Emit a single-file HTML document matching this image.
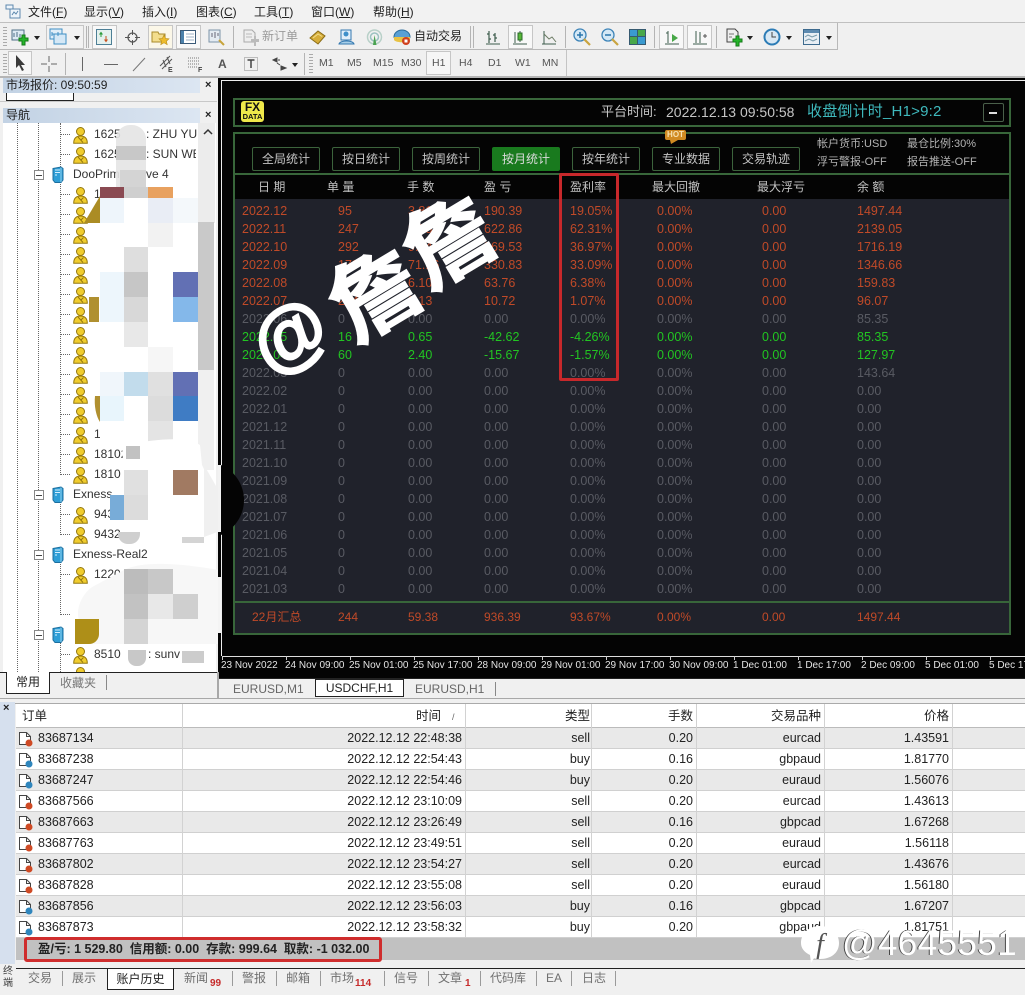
<!DOCTYPE html>
<html><head><meta charset="utf-8"><style>
*{box-sizing:border-box;margin:0;padding:0}
html,body{width:1025px;height:995px;overflow:hidden;background:#f0f0f0}
body{position:relative;font:12px "Liberation Sans","Noto Sans CJK SC",sans-serif;color:#222}
.a{position:absolute;white-space:nowrap}
.t{position:absolute;white-space:nowrap;line-height:16px}
.m{font-size:12px;top:4px;color:#222}
.sep{position:absolute;width:1px;background:#b4b4b4;height:22px}
.prs{position:absolute;border:1px solid #c6c6c6;background:#f8f8f8;height:24px}
.arr{position:absolute;width:0;height:0;border:3px solid transparent;border-top:4px solid #222;border-bottom:0}
.tf{position:absolute;top:56px;font-size:10.5px;color:#555;line-height:14px}
svg.i{position:absolute;overflow:visible}
.hd{position:absolute;left:3px;width:197px;height:15px;background:linear-gradient(90deg,#c2d2e4,#dce6f2);font-size:12px;line-height:15px;padding-left:3px;color:#222}
.x{position:absolute;font:bold 11px "Liberation Sans",sans-serif;color:#222;line-height:12px}
.n{position:absolute;left:94px;font-size:12px;line-height:16px;color:#333;white-space:nowrap}
.bk{position:absolute}
.dl{position:absolute;border-left:1px dotted #666}
.dh{position:absolute;border-top:1px dotted #666;height:0;width:9px}
.btn{position:absolute;top:147px;width:68px;height:24px;border:1px solid #3c643c;border-radius:2px;color:#c4c4c4;font-size:12px;line-height:23px;text-align:center;background:#060606}
.r{position:absolute;left:234px;width:776px;height:18px;line-height:18px;font-size:12.5px}
.r span{position:absolute;white-space:nowrap}
.r .c1{left:8px}.r .c2{left:104px}.r .c3{left:174px}.r .c4{left:250px}.r .c5{left:336px}.r .c6{left:423px}.r .c7{left:528px}.r .c8{left:623px}
.o{color:#c04a28}.g{color:#22c522}.z{color:#595b63}
.th{position:absolute;top:179px;color:#c2c2c2;font-size:12px;line-height:16px;white-space:nowrap}
.tl{position:absolute;top:660px;font-size:10px;color:#e4e4e4;line-height:12px;white-space:nowrap}
.tk{position:absolute;top:656px;width:1px;height:4px;background:#ccc}
.tr{position:absolute;left:16px;width:1009px;height:21px;font-size:12.5px;line-height:21px;border-bottom:1px solid #d0d0d0}
.tr span{position:absolute;white-space:nowrap}
.tr .s1{left:22px}.tr .s2{right:563px}.tr .s3{right:435px}.tr .s4{right:332px}.tr .s5{right:204px}.tr .s6{right:76px}
.gr{background:#e9e9e9}.wh{background:#fff}
.cl{position:absolute;top:704px;width:1px;height:233px;background:#d2d2d2}
.bt{position:absolute;top:970px;font-size:12px;line-height:16px;color:#707070}
.bs{position:absolute;top:971px;width:1px;height:15px;background:#9a9a9a}
.sb{position:absolute;color:#c62a2a;font-size:10px;font-weight:bold;line-height:10px;top:979px}
</style></head><body>
<svg width="0" height="0" style="position:absolute"><defs>
<symbol id="u" viewBox="0 0 15 17"><circle cx="7.500" cy="4.500" r="4" fill="#f0cc2e" stroke="#94780e"/><path d="M.7 16.300c0-5.300 2.600-7.300 6.800-7.300s6.800 2 6.800 7.300z" fill="#f0cc2e" stroke="#94780e"/><path d="M5 10l5 5.500M10.500 10.500l-3 3" stroke="#94780e"/></symbol>
<symbol id="s" viewBox="0 0 12 17"><path d="M1 2.500L9 1l2 1.500V14l-2 2.500H3L1 14z" fill="#2f9ed6" stroke="#1c6f9f"/><path d="M3 4h5M3 6.500h5M3 9h2" stroke="#d6f0ff"/><path d="M9 1.500V16" stroke="#8fd0ef"/></symbol>
<symbol id="dr" viewBox="0 0 15 17"><path d="M1.500 2.500h7l4 4v8h-11z" fill="#fff" stroke="#444"/><path d="M8.500 2.500v4h4" fill="none" stroke="#444"/><circle cx="11" cy="13" r="3.500" fill="#cf4a24"/></symbol>
<symbol id="db" viewBox="0 0 15 17"><path d="M1.500 2.500h7l4 4v8h-11z" fill="#fff" stroke="#444"/><path d="M8.500 2.500v4h4" fill="none" stroke="#444"/><circle cx="11" cy="13" r="3.500" fill="#2f86bd"/></symbol>
</defs></svg>

<!-- menu -->
<div class="a" style="left:0;top:0;width:1025px;height:22px;background:#f2f2f2"></div>
<svg class="i" style="left:5px;top:4px" width="16" height="15" viewBox="0 0 16 15"><path d="M1 1h7v4H1zM5 5h10v9H5z" fill="#eef4fa" stroke="#5d88ad"/><path d="M7 11l2-3 2 2 2-3" fill="none" stroke="#5d88ad"/></svg>
<span class="t m" style="left:28px">文件(<u>F</u>)</span><span class="t m" style="left:84px">显示(<u>V</u>)</span><span class="t m" style="left:142px">插入(<u>I</u>)</span><span class="t m" style="left:196px">图表(<u>C</u>)</span><span class="t m" style="left:254px">工具(<u>T</u>)</span><span class="t m" style="left:311px">窗口(<u>W</u>)</span><span class="t m" style="left:373px">帮助(<u>H</u>)</span>

<!-- toolbars -->
<div class="a" style="left:0;top:22px;width:1025px;height:1px;background:#c0c0c0"></div>
<div class="a" style="left:837px;top:23px;width:1px;height:27px;background:#b8b8b8"></div>
<div class="a" style="left:0;top:49px;width:837px;height:1px;background:#b8b8b8"></div>
<div class="a" style="left:566px;top:50px;width:1px;height:27px;background:#c4c4c4"></div>
<div class="a" style="left:0;top:76px;width:1025px;height:2px;background:#b5b5b5"></div>
<div class="a" style="left:3px;top:27px;width:4px;height:19px;background:repeating-linear-gradient(#aaa 0 1px,transparent 1px 3px)"></div>
<div class="a" style="left:3px;top:54px;width:4px;height:19px;background:repeating-linear-gradient(#aaa 0 1px,transparent 1px 3px)"></div>

<svg class="i" style="left:11px;top:29px" width="18" height="18" viewBox="0 0 18 18"><path d="M1 1h12v10H1z" fill="#dde9f2" stroke="#4f6f86"/><path d="M3 8V4M6 8V3M9 8V5" stroke="#4f6f86"/><path d="M8 9h3V6h3v3h3v3h-3v4h-3v-4H8z" fill="#25b52a" stroke="#157a19"/></svg>
<div class="arr" style="left:34px;top:36px"></div>
<div class="prs" style="left:46px;top:25px;width:38px;background:#f2f2f2"></div>
<svg class="i" style="left:49px;top:28px" width="18" height="18" viewBox="0 0 18 18"><path d="M1 1h12v10H1z" fill="#e0eef8" stroke="#3f8fc4"/><path d="M5 6h12v10H5z" fill="#d5e8f6" stroke="#3f8fc4"/><path d="M3 4v4M3 6h6M9 4v4" stroke="#3f8fc4"/></svg>
<div class="arr" style="left:74px;top:36px"></div>
<div class="sep" style="left:86px;top:26px"></div><div class="sep" style="left:88px;top:26px"></div>
<div class="prs" style="left:92px;top:25px;width:25px"></div>
<svg class="i" style="left:96px;top:29px" width="16" height="16" viewBox="0 0 16 16"><rect x=".5" y=".5" width="15" height="15" fill="#e4f1ee" stroke="#4d7f96"/><path d="M5 8V4M3.500 5.500L5 3.500l1.500 2" fill="#2b9a3a" stroke="#2b9a3a"/><path d="M10 7v5M8.500 10.500l1.500 2 1.500-2" fill="#c8501f" stroke="#c8501f"/></svg>
<svg class="i" style="left:125px;top:30px" width="15" height="15" viewBox="0 0 15 15"><circle cx="7.500" cy="7.500" r="4.500" fill="none" stroke="#555" stroke-width="1.300"/><path d="M7.500 0v5M7.500 10v5M0 7.500h5M10 7.500h5" stroke="#555"/></svg>
<div class="prs" style="left:148px;top:25px;width:25px;background:#fbf7e8"></div>
<svg class="i" style="left:151px;top:29px" width="19" height="17" viewBox="0 0 19 17"><path d="M1 3h6l1 2h6v8H1z" fill="#f3dd8d" stroke="#a88a2c"/><path d="M13 6l1.600 3.400 3.400.4-2.600 2.300.8 3.600-3.200-1.900-3.200 1.900.8-3.600L8 9.800l3.400-.4z" fill="#eebc2c" stroke="#b58a18" stroke-width=".6"/></svg>
<div class="prs" style="left:176px;top:25px;width:25px"></div>
<svg class="i" style="left:180px;top:29px" width="16" height="16" viewBox="0 0 16 16"><rect x=".5" y="1.500" width="15" height="13" fill="#fff" stroke="#3a5a78"/><rect x="1" y="2" width="3" height="12" fill="#4b81ab"/><path d="M6 5h8M6 8h8M6 11h8" stroke="#9cb2c4"/></svg>
<svg class="i" style="left:208px;top:29px" width="18" height="18" viewBox="0 0 18 18"><path d="M1 1h11v12H1z" fill="#e4ebf2" stroke="#7d93a8"/><path d="M4 8V4M7 9V3M10 7V4" stroke="#667"/><path d="M11 11l5 5" stroke="#c7a43c" stroke-width="2"/></svg>
<div class="sep" style="left:233px;top:26px"></div>
<svg class="i" style="left:243px;top:29px" width="17" height="18" viewBox="0 0 17 18"><path d="M1 1h8l3 3v9H1z" fill="#eee" stroke="#aaa"/><path d="M3 5h6M3 8h6" stroke="#bbb"/><path d="M8 10h3V7h2v3h3v3h-3v4h-2v-4H8z" fill="#bbb"/></svg>
<span class="t" style="left:262px;top:28px;color:#9a9a9a">新订单</span>
<svg class="i" style="left:309px;top:29px" width="18" height="17" viewBox="0 0 18 17"><path d="M1 9l8-7 7 5-7 8z" fill="#d6ad3a" stroke="#8a6c16"/><path d="M4 9l5-4 4 2.500" fill="none" stroke="#f0dc8c"/></svg>
<svg class="i" style="left:338px;top:29px" width="17" height="17" viewBox="0 0 17 17"><path d="M3 1h10v10H3z" fill="#e2eefa" stroke="#3478b0"/><circle cx="8" cy="5" r="2.500" fill="#3f8fca"/><path d="M1 15c1-4 14-4 15 0z" fill="#a9cfe8" stroke="#3478b0"/></svg>
<svg class="i" style="left:366px;top:29px" width="17" height="17" viewBox="0 0 17 17"><circle cx="8.500" cy="8" r="7" fill="none" stroke="#b8d0c8" stroke-width="1.500"/><circle cx="8.500" cy="8" r="4" fill="none" stroke="#9cc2c0" stroke-width="1.500"/><path d="M8.500 6l2 10H7z" fill="#49a24f"/></svg>
<svg class="i" style="left:393px;top:28px" width="18" height="18" viewBox="0 0 18 18"><path d="M1 9a8 7 0 0 1 16 0c0 4-16 4-16 0z" fill="#5aa0d4" stroke="#2a6c9c"/><path d="M1 9h16v3c-2 3-14 3-16 0z" fill="#e8c244"/><circle cx="13" cy="13" r="4" fill="#d0401e"/><rect x="11.500" y="11.500" width="3" height="3" fill="#fff"/></svg>
<span class="t" style="left:414px;top:28px">自动交易</span>
<div class="sep" style="left:470px;top:26px"></div><div class="sep" style="left:473px;top:26px"></div>
<svg class="i" style="left:485px;top:30px" width="16" height="15" viewBox="0 0 16 15"><path d="M1 14h14" stroke="#3d5c4c"/><path d="M4 1v12M2 4h2M4 9h2M10 3v9M8 5h2M10 8h2" stroke="#3d5c4c" stroke-width="1.200"/></svg>
<div class="prs" style="left:508px;top:25px;width:25px"></div>
<svg class="i" style="left:512px;top:30px" width="16" height="15" viewBox="0 0 16 15"><path d="M1 14h14M3 2v11" stroke="#3d5c4c"/><path d="M8 1v11" stroke="#3d5c4c"/><rect x="6" y="3" width="4" height="7" fill="#58b838" stroke="#2a6a2a"/></svg>
<svg class="i" style="left:541px;top:30px" width="16" height="15" viewBox="0 0 16 15"><path d="M1 14h14M3 1v13" stroke="#3d5c4c"/><path d="M3 4l5 5 3-2 4 5" fill="none" stroke="#6a7a62"/></svg>
<div class="sep" style="left:565px;top:26px"></div>
<svg class="i" style="left:573px;top:28px" width="18" height="18" viewBox="0 0 18 18"><circle cx="7" cy="7" r="6" fill="#d4e8f6" stroke="#3d84b8" stroke-width="1.300"/><path d="M4 7h6M7 4v6" stroke="#2a76ac" stroke-width="1.500"/><path d="M11 11l6 6" stroke="#c9a440" stroke-width="2.200"/></svg>
<svg class="i" style="left:601px;top:28px" width="18" height="18" viewBox="0 0 18 18"><circle cx="7" cy="7" r="6" fill="#d4e8f6" stroke="#3d84b8" stroke-width="1.300"/><path d="M4 7h6" stroke="#2a76ac" stroke-width="1.500"/><path d="M11 11l6 6" stroke="#c9a440" stroke-width="2.200"/></svg>
<svg class="i" style="left:629px;top:29px" width="17" height="16" viewBox="0 0 17 16"><rect width="17" height="16" fill="#365a70"/><rect x="1" y="1" width="7" height="6" fill="#3a9ad0"/><rect x="9" y="1" width="7" height="6" fill="#49a84a"/><rect x="1" y="8" width="7" height="7" fill="#49a84a"/><rect x="9" y="8" width="7" height="7" fill="#3a9ad0"/></svg>
<div class="sep" style="left:654px;top:26px"></div>
<div class="prs" style="left:659px;top:25px;width:25px"></div>
<svg class="i" style="left:664px;top:30px" width="16" height="15" viewBox="0 0 16 15"><path d="M1 14h14M4 1v12M2 3h2" stroke="#3d5c4c"/><path d="M8 4l6 4-6 4z" fill="#48a848"/></svg>
<div class="prs" style="left:687px;top:25px;width:25px"></div>
<svg class="i" style="left:692px;top:30px" width="16" height="15" viewBox="0 0 16 15"><path d="M1 14h14M4 1v12M8 2v11" stroke="#3d5c4c"/><path d="M11 6h4M13 4v4" stroke="#555"/></svg>
<div class="sep" style="left:716px;top:26px"></div>
<svg class="i" style="left:726px;top:28px" width="18" height="19" viewBox="0 0 18 19"><path d="M1 1h8l3 3v10H1z" fill="#eee" stroke="#444"/><path d="M3 6h5M3 9h3" stroke="#777"/><path d="M7 11h3V8h3v3h3v3h-3v4h-3v-4H7z" fill="#25b52a" stroke="#157a19"/></svg>
<div class="arr" style="left:747px;top:36px"></div>
<svg class="i" style="left:763px;top:28px" width="18" height="18" viewBox="0 0 18 18"><circle cx="9" cy="9" r="7.500" fill="#d8e8f4" stroke="#2c7cb6" stroke-width="2"/><path d="M9 4v5h4" fill="none" stroke="#444"/></svg>
<div class="arr" style="left:786px;top:36px"></div>
<svg class="i" style="left:803px;top:29px" width="17" height="16" viewBox="0 0 17 16"><rect x=".5" y=".5" width="16" height="15" fill="#e8eef4" stroke="#3d6a8e"/><rect x="1" y="1" width="15" height="3" fill="#5d8ab0"/><path d="M2 8l3-2 4 2 5-2M2 12l4-2 4 2 4-2" fill="none" stroke="#79a"/></svg>
<div class="arr" style="left:826px;top:36px"></div>

<div class="prs" style="left:8px;top:51px;width:24px;background:#f6f6f6"></div>
<svg class="i" style="left:15px;top:55px" width="11" height="16" viewBox="0 0 11 16"><path d="M1 0v13l3-3 3 6 2-1-3-5h4z" fill="#3a3a3a"/></svg>
<svg class="i" style="left:41px;top:56px" width="16" height="16" viewBox="0 0 16 16"><path d="M8 0v6M8 10v6M0 8h6M10 8h6" stroke="#666"/></svg>
<div class="sep" style="left:65px;top:53px"></div>
<div class="a" style="left:82px;top:57px;width:1px;height:14px;background:#666"></div>
<div class="a" style="left:104px;top:64px;width:14px;height:1px;background:#666"></div>
<svg class="i" style="left:132px;top:57px" width="14" height="15" viewBox="0 0 14 15"><path d="M1 14L13 1" stroke="#777"/></svg>
<svg class="i" style="left:159px;top:55px" width="16" height="18" viewBox="0 0 16 18"><path d="M1 11L11 1M3 14L13 4M4 5l3 7M8 2l3 7" stroke="#555" fill="none"/><text x="9" y="17" font-size="7" font-weight="bold" fill="#444" font-family="Liberation Sans">E</text></svg>
<svg class="i" style="left:187px;top:56px" width="17" height="17" viewBox="0 0 17 17"><path d="M1 2h12M1 5h12M1 8h12M1 11h9" stroke="#777" stroke-dasharray="1 1"/><text x="11" y="16" font-size="7" font-weight="bold" fill="#444" font-family="Liberation Sans">F</text></svg>
<span class="t" style="left:218px;top:56px;font-weight:bold;font-size:12px;color:#555">A</span>
<svg class="i" style="left:244px;top:57px" width="14" height="14" viewBox="0 0 14 14"><rect x=".5" y=".5" width="13" height="13" fill="none" stroke="#888" stroke-dasharray="1 1"/><path d="M3.500 3h7M7 3v8" stroke="#444" stroke-width="1.500"/></svg>
<svg class="i" style="left:272px;top:57px" width="16" height="13" viewBox="0 0 16 13"><path d="M1 3l4-2v4zM6 3h2M9 9l5 2-5 2zM5 6l3 2" fill="#444" stroke="#444"/></svg>
<div class="arr" style="left:292px;top:63px"></div>
<div class="sep" style="left:304px;top:53px"></div>
<div class="a" style="left:309px;top:54px;width:4px;height:19px;background:repeating-linear-gradient(#aaa 0 1px,transparent 1px 3px)"></div>
<span class="tf" style="left:319px">M1</span><span class="tf" style="left:347px">M5</span><span class="tf" style="left:373px">M15</span><span class="tf" style="left:401px">M30</span>
<div class="prs" style="left:426px;top:51px;width:25px;background:#f6f6f6"></div>
<span class="tf" style="left:432px">H1</span><span class="tf" style="left:459px">H4</span><span class="tf" style="left:488px">D1</span><span class="tf" style="left:515px">W1</span><span class="tf" style="left:542px">MN</span>

<!-- left panels -->
<div class="hd" style="top:78px">市场报价: 09:50:59</div><span class="x" style="left:205px;top:79px">×</span>
<div class="a" style="left:6px;top:93px;width:68px;height:8px;background:#fff;border:1px solid #222;border-top:0"></div>
<div class="a" style="left:0;top:101px;width:217px;height:6px;background:#f0f0f0;border-top:1px solid #c8c8c8"></div>
<div class="hd" style="top:108px">导航</div><span class="x" style="left:205px;top:109px">×</span>
<div class="a" style="left:3px;top:123px;width:213px;height:549px;background:#fff"></div>
<div class="dl" style="left:17px;top:123px;height:549px"></div>
<div class="dl" style="left:38px;top:123px;height:549px"></div>
<div class="dl" style="left:60px;top:123px;height:52px"></div><div class="dl" style="left:60px;top:180px;height:295px"></div><div class="dl" style="left:60px;top:500px;height:35px"></div><div class="dl" style="left:60px;top:560px;height:55px"></div><div class="dl" style="left:60px;top:640px;height:32px"></div>

<div class="dh" style="left:61px;top:134px"></div><svg class="i" style="left:73px;top:127px" width="15" height="17"><use href="#u"/></svg>
<div class="dh" style="left:61px;top:154px"></div><svg class="i" style="left:73px;top:147px" width="15" height="17"><use href="#u"/></svg>
<div class="dh" style="left:61px;top:194px"></div><svg class="i" style="left:73px;top:187px" width="15" height="17"><use href="#u"/></svg>
<div class="dh" style="left:61px;top:214px"></div><svg class="i" style="left:73px;top:207px" width="15" height="17"><use href="#u"/></svg>
<div class="dh" style="left:61px;top:234px"></div><svg class="i" style="left:73px;top:227px" width="15" height="17"><use href="#u"/></svg>
<div class="dh" style="left:61px;top:254px"></div><svg class="i" style="left:73px;top:247px" width="15" height="17"><use href="#u"/></svg>
<div class="dh" style="left:61px;top:274px"></div><svg class="i" style="left:73px;top:267px" width="15" height="17"><use href="#u"/></svg>
<div class="dh" style="left:61px;top:294px"></div><svg class="i" style="left:73px;top:287px" width="15" height="17"><use href="#u"/></svg>
<div class="dh" style="left:61px;top:314px"></div><svg class="i" style="left:73px;top:307px" width="15" height="17"><use href="#u"/></svg>
<div class="dh" style="left:61px;top:334px"></div><svg class="i" style="left:73px;top:327px" width="15" height="17"><use href="#u"/></svg>
<div class="dh" style="left:61px;top:354px"></div><svg class="i" style="left:73px;top:347px" width="15" height="17"><use href="#u"/></svg>
<div class="dh" style="left:61px;top:374px"></div><svg class="i" style="left:73px;top:367px" width="15" height="17"><use href="#u"/></svg>
<div class="dh" style="left:61px;top:394px"></div><svg class="i" style="left:73px;top:387px" width="15" height="17"><use href="#u"/></svg>
<div class="dh" style="left:61px;top:414px"></div><svg class="i" style="left:73px;top:407px" width="15" height="17"><use href="#u"/></svg>
<div class="dh" style="left:61px;top:434px"></div><svg class="i" style="left:73px;top:427px" width="15" height="17"><use href="#u"/></svg>
<div class="dh" style="left:61px;top:454px"></div><svg class="i" style="left:73px;top:447px" width="15" height="17"><use href="#u"/></svg>
<div class="dh" style="left:61px;top:474px"></div><svg class="i" style="left:73px;top:467px" width="15" height="17"><use href="#u"/></svg>
<div class="dh" style="left:61px;top:514px"></div><svg class="i" style="left:73px;top:507px" width="15" height="17"><use href="#u"/></svg>
<div class="dh" style="left:61px;top:534px"></div><svg class="i" style="left:73px;top:527px" width="15" height="17"><use href="#u"/></svg>
<div class="dh" style="left:61px;top:574px"></div><svg class="i" style="left:73px;top:567px" width="15" height="17"><use href="#u"/></svg>
<div class="dh" style="left:61px;top:614px"></div>
<div class="dh" style="left:61px;top:654px"></div><svg class="i" style="left:73px;top:647px" width="15" height="17"><use href="#u"/></svg>
<svg class="i" style="left:73px;top:667px;clip-path:inset(0 0 12px 0)" width="15" height="17"><use href="#u"/></svg>

<div class="a" style="left:34px;top:170px;width:10px;height:10px;border:1px solid #888;background:#fff"></div><div class="a" style="left:36px;top:175px;width:6px;height:1px;background:#444"></div><svg class="i" style="left:52px;top:166px" width="12" height="17"><use href="#s"/></svg>
<div class="a" style="left:34px;top:490px;width:10px;height:10px;border:1px solid #888;background:#fff"></div><div class="a" style="left:36px;top:495px;width:6px;height:1px;background:#444"></div><svg class="i" style="left:52px;top:486px" width="12" height="17"><use href="#s"/></svg>
<div class="a" style="left:34px;top:550px;width:10px;height:10px;border:1px solid #888;background:#fff"></div><div class="a" style="left:36px;top:555px;width:6px;height:1px;background:#444"></div><svg class="i" style="left:52px;top:546px" width="12" height="17"><use href="#s"/></svg>
<div class="a" style="left:34px;top:630px;width:10px;height:10px;border:1px solid #888;background:#fff"></div><div class="a" style="left:36px;top:635px;width:6px;height:1px;background:#444"></div><svg class="i" style="left:52px;top:626px" width="12" height="17"><use href="#s"/></svg>

<span class="n" style="top:126px">1625</span><span class="n" style="top:126px;left:146px">: ZHU YU</span>
<span class="n" style="top:146px">1625</span><span class="n" style="top:146px;left:146px;width:50px;overflow:hidden">: SUN WEI</span>
<span class="n" style="top:166px;left:73px">DooPrim</span><span class="n" style="top:166px;left:146px">ve 4</span>
<span class="n" style="top:186px">1810</span>
<span class="n" style="top:426px">181</span>
<span class="n" style="top:446px">18102</span>
<span class="n" style="top:466px">1810</span>
<span class="n" style="top:486px;left:73px">Exness</span>
<span class="n" style="top:506px">943</span>
<span class="n" style="top:526px">9432</span>
<span class="n" style="top:546px;left:73px">Exness-Real2</span>
<span class="n" style="top:566px">1220</span>
<span class="n" style="top:646px">8510</span><span class="n" style="top:646px;left:148px">: sunv</span>

<!-- mosaic -->
<div class="bk" style="left:198px;top:123px;width:17px;height:100px;background:#ececec"></div>
<div class="bk" style="left:198px;top:222px;width:16px;height:148px;background:#c9c9c9"></div>
<div class="bk" style="left:198px;top:370px;width:16px;height:100px;background:#f0f0f0"></div>
<svg class="i" style="left:203px;top:128px" width="10" height="7" viewBox="0 0 10 7"><path d="M1 6l4-4 4 4" fill="none" stroke="#333" stroke-width="1.500"/></svg>
<div class="bk" style="left:116px;top:125px;width:30px;height:62px;background:#e4e4e4;border-radius:14px 14px 0 0;opacity:.9"></div>
<div class="bk" style="left:116px;top:146px;width:30px;height:14px;background:#c8c8c8"></div>
<div class="bk" style="left:120px;top:170px;width:26px;height:17px;background:#d4d4d4"></div>
<div class="bk" style="left:100px;top:187px;width:98px;height:258px;background:#fff"></div>
<div class="bk" style="left:100px;top:187px;width:24px;height:11px;background:#8a4a52"></div>
<div class="bk" style="left:124px;top:187px;width:24px;height:11px;background:#cfcfcf"></div>
<div class="bk" style="left:148px;top:187px;width:25px;height:11px;background:#e8a15f"></div>
<svg class="i" style="left:84px;top:196px" width="16" height="27"><path d="M16 0v27H0z" fill="#ab8c24"/></svg>
<div class="bk" style="left:100px;top:198px;width:24px;height:25px;background:#eef5fb"></div>
<div class="bk" style="left:148px;top:198px;width:25px;height:25px;background:#e9edf5"></div>
<div class="bk" style="left:173px;top:198px;width:25px;height:25px;background:#f4f8fb"></div>
<div class="bk" style="left:148px;top:223px;width:25px;height:24px;background:#f2f2f2"></div>
<div class="bk" style="left:124px;top:247px;width:24px;height:25px;background:#dedede"></div>
<div class="bk" style="left:100px;top:272px;width:24px;height:25px;background:#edf6fc"></div>
<div class="bk" style="left:124px;top:272px;width:24px;height:25px;background:#c6c6c6"></div>
<div class="bk" style="left:173px;top:272px;width:25px;height:25px;background:#6270b4"></div>
<div class="bk" style="left:89px;top:297px;width:10px;height:25px;background:#b09030"></div>
<div class="bk" style="left:100px;top:297px;width:24px;height:25px;background:#edf6fc"></div>
<div class="bk" style="left:124px;top:297px;width:24px;height:25px;background:#d8d8d8"></div>
<div class="bk" style="left:173px;top:297px;width:25px;height:25px;background:#84b8ea"></div>
<div class="bk" style="left:124px;top:322px;width:24px;height:25px;background:#e8e8e8"></div>
<div class="bk" style="left:148px;top:347px;width:25px;height:25px;background:#f6f6f6"></div>
<div class="bk" style="left:100px;top:372px;width:24px;height:24px;background:#f0f6fb"></div>
<div class="bk" style="left:124px;top:372px;width:24px;height:24px;background:#c2dcec"></div>
<div class="bk" style="left:148px;top:372px;width:25px;height:24px;background:#e0e0e0"></div>
<div class="bk" style="left:173px;top:372px;width:25px;height:24px;background:#6270b4"></div>
<svg class="i" style="left:92px;top:396px" width="8" height="26"><path d="M3 0h5v26C4 20 2 10 3 0z" fill="#b09030"/></svg>
<div class="bk" style="left:100px;top:396px;width:24px;height:25px;background:#e8f5fc"></div>
<div class="bk" style="left:148px;top:396px;width:25px;height:25px;background:#dcdcdc"></div>
<div class="bk" style="left:173px;top:396px;width:25px;height:25px;background:#3f7cc4"></div>
<div class="bk" style="left:148px;top:421px;width:25px;height:24px;background:#e4e4e4"></div>

<svg class="i" style="left:112px;top:425px" width="112" height="115"><path d="M10 20C40 15 75 10 88 20L90 40 102 65 110 70 110 105C90 115 30 112 16 110L6 80 12 60z" fill="#fff"/><path d="M92 40l16 28v38l-16 6z" fill="#f0f0f0"/></svg>
<div class="bk" style="left:126px;top:446px;width:14px;height:13px;background:#c2c2c2"></div>
<div class="bk" style="left:124px;top:470px;width:24px;height:25px;background:#e0e0e0"></div>
<div class="bk" style="left:173px;top:470px;width:25px;height:25px;background:#a17a62"></div>
<div class="bk" style="left:110px;top:495px;width:14px;height:25px;background:#78acd8"></div>
<div class="bk" style="left:124px;top:495px;width:24px;height:25px;background:#dcdcdc"></div>
<div class="bk" style="left:118px;top:532px;width:22px;height:12px;background:#cfcfcf;border-radius:0 0 10px 10px"></div>
<div class="bk" style="left:182px;top:537px;width:22px;height:6px;background:#d4d4d4"></div>

<svg class="i" style="left:74px;top:562px" width="150" height="82"><path d="M50 8C70-2 110 2 145 8l3 50-3 24H14C8 76 4 70 6 60 0 50 8 30 20 24z" fill="#f7f7f7"/></svg>
<div class="bk" style="left:124px;top:569px;width:24px;height:25px;background:#bcbcbc"></div>
<div class="bk" style="left:148px;top:569px;width:25px;height:25px;background:#c8c8c8"></div>
<div class="bk" style="left:124px;top:594px;width:24px;height:25px;background:#c2c2c2"></div>
<div class="bk" style="left:148px;top:594px;width:25px;height:25px;background:#e8e8e8"></div>
<div class="bk" style="left:173px;top:594px;width:25px;height:25px;background:#cfcfcf"></div>
<div class="bk" style="left:124px;top:619px;width:24px;height:25px;background:#d4d4d4"></div>
<div class="bk" style="left:75px;top:619px;width:24px;height:25px;background:#ae8f18;border-radius:0 0 10px 0"></div>
<div class="bk" style="left:128px;top:650px;width:18px;height:16px;background:#c8c8c8;border-radius:0 0 8px 8px"></div>
<div class="bk" style="left:182px;top:651px;width:22px;height:12px;background:#cccccc"></div>

<!-- nav tabs -->
<div class="a" style="left:0;top:672px;width:217px;height:26px;background:#f0f0f0;border-top:1px solid #222"></div>
<div class="a" style="left:6px;top:672px;width:44px;height:22px;background:#fff;border:1px solid #222;border-top:0;text-align:center;line-height:20px;color:#222">常用</div>
<span class="t" style="left:60px;top:675px;color:#777">收藏夹</span>
<div class="a" style="left:106px;top:675px;width:1px;height:15px;background:#888"></div>

<!-- chart -->
<div class="a" style="left:218px;top:78px;width:807px;height:600px;background:#040404"></div>
<div class="a" style="left:221px;top:80px;width:804px;height:1px;background:#eee"></div>
<div class="a" style="left:221px;top:80px;width:1px;height:576px;background:#eee"></div>
<div class="a" style="left:218px;top:465px;width:3px;height:67px;background:#f2f2f2"></div>
<div class="a" style="left:218px;top:577px;width:3px;height:56px;background:#f4f4f4"></div>
<div class="a" style="left:233px;top:98px;width:778px;height:29px;border:2px solid #38663a;background:#040404"></div>
<div class="a" style="left:241px;top:101px;width:23px;height:21px;background:#efe84a;border-radius:3px;color:#111;text-align:center;font:bold 12px/11px 'Liberation Sans',sans-serif;padding-top:1px">FX<div style="font-size:7.500px;line-height:8px">DATA</div></div>
<span class="t" style="left:601px;top:104px;font-size:13px;color:#c6c6c6">平台时间:</span>
<span class="t" style="left:666px;top:104px;font-size:14px;color:#c6c6c6">2022.12.13 09:50:58</span>
<span class="t" style="left:807px;top:104px;font-size:15px;letter-spacing:.2px;color:#3fb9bd">收盘倒计时_H1&gt;9:2</span>
<div class="a" style="left:983px;top:103px;width:21px;height:19px;border:1px solid #4a5f4a;border-radius:2px"></div><div class="a" style="left:989px;top:112px;width:8px;height:2px;background:#ddd"></div>

<div class="a" style="left:233px;top:132px;width:778px;height:503px;border:2px solid #38663a;background:#20222b"></div>
<div class="a" style="left:235px;top:134px;width:774px;height:41px;background:#040404;border-bottom:2px solid #38663a"></div>
<div class="a" style="left:235px;top:175px;width:774px;height:24px;background:#040404"></div>
<div class="btn" style="left:252px">全局统计</div><div class="btn" style="left:332px">按日统计</div><div class="btn" style="left:412px">按周统计</div><div class="btn" style="left:492px;background:#197a1e;color:#dcdcdc;border-color:#197a1e">按月统计</div><div class="btn" style="left:572px">按年统计</div><div class="btn" style="left:652px">专业数据</div><div class="btn" style="left:732px">交易轨迹</div>
<div class="a" style="left:665px;top:130px;width:21px;height:10px;background:#d08a22;border-radius:2px;color:#f6e0b0;font:bold 8px/10px 'Liberation Sans',sans-serif;text-align:center">HOT</div>
<svg class="i" style="left:670px;top:140px" width="8" height="4"><path d="M0 0h8L1 4z" fill="#d08a22"/></svg>
<span class="t" style="left:817px;top:136px;font-size:11px;color:#b4b4b4">帐户货币:USD</span><span class="t" style="left:907px;top:136px;font-size:11px;color:#b4b4b4">最仓比例:30%</span>
<span class="t" style="left:817px;top:154px;font-size:11px;color:#b4b4b4">浮亏警报-OFF</span><span class="t" style="left:907px;top:154px;font-size:11px;color:#b4b4b4">报告推送-OFF</span>

<span class="th" style="left:258px">日 期</span><span class="th" style="left:327px">单 量</span><span class="th" style="left:407px">手 数</span><span class="th" style="left:484px">盈 亏</span><span class="th" style="left:570px">盈利率</span><span class="th" style="left:652px">最大回撤</span><span class="th" style="left:757px">最大浮亏</span><span class="th" style="left:857px">余 额</span>

<div class="r o" style="top:202px"><span class="c1">2022.12</span><span class="c2">95</span><span class="c3">3.81</span><span class="c4">190.39</span><span class="c5">19.05%</span><span class="c6">0.00%</span><span class="c7">0.00</span><span class="c8">1497.44</span></div>
<div class="r o" style="top:220px"><span class="c1">2022.11</span><span class="c2">247</span><span class="c3">9.88</span><span class="c4">622.86</span><span class="c5">62.31%</span><span class="c6">0.00%</span><span class="c7">0.00</span><span class="c8">2139.05</span></div>
<div class="r o" style="top:238px"><span class="c1">2022.10</span><span class="c2">292</span><span class="c3">9.64</span><span class="c4">369.53</span><span class="c5">36.97%</span><span class="c6">0.00%</span><span class="c7">0.00</span><span class="c8">1716.19</span></div>
<div class="r o" style="top:256px"><span class="c1">2022.09</span><span class="c2">179</span><span class="c3">71.16</span><span class="c4">330.83</span><span class="c5">33.09%</span><span class="c6">0.00%</span><span class="c7">0.00</span><span class="c8">1346.66</span></div>
<div class="r o" style="top:274px"><span class="c1">2022.08</span><span class="c2">53</span><span class="c3">6.10</span><span class="c4">63.76</span><span class="c5">6.38%</span><span class="c6">0.00%</span><span class="c7">0.00</span><span class="c8">159.83</span></div>
<div class="r o" style="top:292px"><span class="c1">2022.07</span><span class="c2">254</span><span class="c3">2.13</span><span class="c4">10.72</span><span class="c5">1.07%</span><span class="c6">0.00%</span><span class="c7">0.00</span><span class="c8">96.07</span></div>
<div class="r z" style="top:310px"><span class="c1">2022.06</span><span class="c2">0</span><span class="c3">0.00</span><span class="c4">0.00</span><span class="c5">0.00%</span><span class="c6">0.00%</span><span class="c7">0.00</span><span class="c8">85.35</span></div>
<div class="r g" style="top:328px"><span class="c1">2022.05</span><span class="c2">16</span><span class="c3">0.65</span><span class="c4">-42.62</span><span class="c5">-4.26%</span><span class="c6">0.00%</span><span class="c7">0.00</span><span class="c8">85.35</span></div>
<div class="r g" style="top:346px"><span class="c1">2022.04</span><span class="c2">60</span><span class="c3">2.40</span><span class="c4">-15.67</span><span class="c5">-1.57%</span><span class="c6">0.00%</span><span class="c7">0.00</span><span class="c8">127.97</span></div>
<div class="r z" style="top:364px"><span class="c1">2022.03</span><span class="c2">0</span><span class="c3">0.00</span><span class="c4">0.00</span><span class="c5">0.00%</span><span class="c6">0.00%</span><span class="c7">0.00</span><span class="c8">143.64</span></div>
<div class="r z" style="top:382px"><span class="c1">2022.02</span><span class="c2">0</span><span class="c3">0.00</span><span class="c4">0.00</span><span class="c5">0.00%</span><span class="c6">0.00%</span><span class="c7">0.00</span><span class="c8">0.00</span></div>
<div class="r z" style="top:400px"><span class="c1">2022.01</span><span class="c2">0</span><span class="c3">0.00</span><span class="c4">0.00</span><span class="c5">0.00%</span><span class="c6">0.00%</span><span class="c7">0.00</span><span class="c8">0.00</span></div>
<div class="r z" style="top:418px"><span class="c1">2021.12</span><span class="c2">0</span><span class="c3">0.00</span><span class="c4">0.00</span><span class="c5">0.00%</span><span class="c6">0.00%</span><span class="c7">0.00</span><span class="c8">0.00</span></div>
<div class="r z" style="top:436px"><span class="c1">2021.11</span><span class="c2">0</span><span class="c3">0.00</span><span class="c4">0.00</span><span class="c5">0.00%</span><span class="c6">0.00%</span><span class="c7">0.00</span><span class="c8">0.00</span></div>
<div class="r z" style="top:454px"><span class="c1">2021.10</span><span class="c2">0</span><span class="c3">0.00</span><span class="c4">0.00</span><span class="c5">0.00%</span><span class="c6">0.00%</span><span class="c7">0.00</span><span class="c8">0.00</span></div>
<div class="r z" style="top:472px"><span class="c1">2021.09</span><span class="c2">0</span><span class="c3">0.00</span><span class="c4">0.00</span><span class="c5">0.00%</span><span class="c6">0.00%</span><span class="c7">0.00</span><span class="c8">0.00</span></div>
<div class="r z" style="top:490px"><span class="c1">2021.08</span><span class="c2">0</span><span class="c3">0.00</span><span class="c4">0.00</span><span class="c5">0.00%</span><span class="c6">0.00%</span><span class="c7">0.00</span><span class="c8">0.00</span></div>
<div class="r z" style="top:508px"><span class="c1">2021.07</span><span class="c2">0</span><span class="c3">0.00</span><span class="c4">0.00</span><span class="c5">0.00%</span><span class="c6">0.00%</span><span class="c7">0.00</span><span class="c8">0.00</span></div>
<div class="r z" style="top:526px"><span class="c1">2021.06</span><span class="c2">0</span><span class="c3">0.00</span><span class="c4">0.00</span><span class="c5">0.00%</span><span class="c6">0.00%</span><span class="c7">0.00</span><span class="c8">0.00</span></div>
<div class="r z" style="top:544px"><span class="c1">2021.05</span><span class="c2">0</span><span class="c3">0.00</span><span class="c4">0.00</span><span class="c5">0.00%</span><span class="c6">0.00%</span><span class="c7">0.00</span><span class="c8">0.00</span></div>
<div class="r z" style="top:562px"><span class="c1">2021.04</span><span class="c2">0</span><span class="c3">0.00</span><span class="c4">0.00</span><span class="c5">0.00%</span><span class="c6">0.00%</span><span class="c7">0.00</span><span class="c8">0.00</span></div>
<div class="r z" style="top:580px"><span class="c1">2021.03</span><span class="c2">0</span><span class="c3">0.00</span><span class="c4">0.00</span><span class="c5">0.00%</span><span class="c6">0.00%</span><span class="c7">0.00</span><span class="c8">0.00</span></div>
<div class="a" style="left:235px;top:601px;width:774px;height:2px;background:#38663a"></div>
<div class="r o" style="top:608px;font-size:12px"><span style="left:18px">22月汇总</span><span class="c2">244</span><span class="c3">59.38</span><span class="c4">936.39</span><span class="c5">93.67%</span><span class="c6">0.00%</span><span class="c7">0.00</span><span class="c8">1497.44</span></div>

<!-- black blob and red box -->
<svg class="i" style="left:221px;top:465px" width="24" height="70"><path d="M0 0C14 6 23 20 23 35S14 64 0 70z" fill="#040404"/></svg>
<div class="a" style="left:559px;top:173px;width:60px;height:208px;border:3px solid #c7282b;border-radius:2px"></div>

<!-- watermark -->
<svg class="i" style="left:230px;top:170px" width="300" height="260" viewBox="0 0 300 260">
<text x="62" y="170" transform="rotate(-31 62 170)" font-family="Liberation Sans,sans-serif" font-size="76" font-weight="bold" fill="#fff" stroke="#fff" stroke-width="2" text-anchor="middle" dominant-baseline="middle">@</text>
<text x="142" y="119" transform="rotate(-31 142 119)" font-family="Noto Sans CJK SC,sans-serif" font-size="88" font-weight="bold" fill="#fff" stroke="#fff" stroke-width="1.500" text-anchor="middle" dominant-baseline="central">詹</text>
<text x="216" y="66" transform="rotate(-31 216 66)" font-family="Noto Sans CJK SC,sans-serif" font-size="88" font-weight="bold" fill="#fff" stroke="#fff" stroke-width="1.500" text-anchor="middle" dominant-baseline="central">詹</text>
</svg>

<!-- time axis -->
<div class="a" style="left:222px;top:656px;width:803px;height:1px;background:#ddd"></div>
<span class="tk" style="left:222px"></span><span class="tk" style="left:286px"></span><span class="tk" style="left:350px"></span><span class="tk" style="left:414px"></span><span class="tk" style="left:478px"></span><span class="tk" style="left:542px"></span><span class="tk" style="left:606px"></span><span class="tk" style="left:670px"></span><span class="tk" style="left:734px"></span><span class="tk" style="left:798px"></span><span class="tk" style="left:862px"></span><span class="tk" style="left:926px"></span><span class="tk" style="left:990px"></span>
<span class="tl" style="left:221px">23 Nov 2022</span><span class="tl" style="left:285px">24 Nov 09:00</span><span class="tl" style="left:349px">25 Nov 01:00</span><span class="tl" style="left:413px">25 Nov 17:00</span><span class="tl" style="left:477px">28 Nov 09:00</span><span class="tl" style="left:541px">29 Nov 01:00</span><span class="tl" style="left:605px">29 Nov 17:00</span><span class="tl" style="left:669px">30 Nov 09:00</span><span class="tl" style="left:733px">1 Dec 01:00</span><span class="tl" style="left:797px">1 Dec 17:00</span><span class="tl" style="left:861px">2 Dec 09:00</span><span class="tl" style="left:925px">5 Dec 01:00</span><span class="tl" style="left:989px">5 Dec 17:00</span>

<div class="a" style="left:219px;top:678px;width:806px;height:1px;background:#222"></div>
<div class="a" style="left:219px;top:679px;width:806px;height:19px;background:#f0f0f0"></div>
<div class="a" style="left:217px;top:672px;width:2px;height:26px;background:#a8a8a8"></div>
<span class="t" style="left:233px;top:681px;color:#666">EURUSD,M1</span>
<div class="a" style="left:315px;top:678px;width:89px;height:19px;background:#fff;border:1px solid #222;border-top:2px solid #222;text-align:center;line-height:17px;color:#222">USDCHF,H1</div>
<span class="t" style="left:415px;top:681px;color:#666">EURUSD,H1</span>
<div class="a" style="left:495px;top:682px;width:1px;height:14px;background:#888"></div>

<!-- terminal -->
<div class="a" style="left:0;top:698px;width:1025px;height:297px;background:#f0f0f0;border-top:1px solid #a8a8a8"></div>
<div class="a" style="left:0;top:702px;width:15px;height:262px;background:#d6e0ee"></div>
<span class="x" style="left:3px;top:702px">×</span>
<div class="a" style="left:15px;top:703px;width:1010px;height:1px;background:#aaa"></div>
<div class="a" style="left:16px;top:704px;width:1009px;height:24px;background:#fff;border-bottom:1px solid #bbb"></div>
<span class="t" style="left:22px;top:708px;font-size:12.5px">订单</span><span class="t" style="left:416px;top:708px;font-size:12.5px">时间</span><span class="t" style="left:452px;top:709px;font-size:9px;color:#666">/</span><span class="t" style="right:435px;top:708px;font-size:12.5px">类型</span><span class="t" style="right:332px;top:708px;font-size:12.5px">手数</span><span class="t" style="right:204px;top:708px;font-size:12.5px">交易品种</span><span class="t" style="right:76px;top:708px;font-size:12.5px">价格</span>

<div class="tr gr" style="top:728px"><span class="s1">83687134</span><span class="s2">2022.12.12 22:48:38</span><span class="s3">sell</span><span class="s4">0.20</span><span class="s5">eurcad</span><span class="s6">1.43591</span></div>
<div class="tr wh" style="top:749px"><span class="s1">83687238</span><span class="s2">2022.12.12 22:54:43</span><span class="s3">buy</span><span class="s4">0.16</span><span class="s5">gbpaud</span><span class="s6">1.81770</span></div>
<div class="tr gr" style="top:770px"><span class="s1">83687247</span><span class="s2">2022.12.12 22:54:46</span><span class="s3">buy</span><span class="s4">0.20</span><span class="s5">euraud</span><span class="s6">1.56076</span></div>
<div class="tr wh" style="top:791px"><span class="s1">83687566</span><span class="s2">2022.12.12 23:10:09</span><span class="s3">sell</span><span class="s4">0.20</span><span class="s5">eurcad</span><span class="s6">1.43613</span></div>
<div class="tr gr" style="top:812px"><span class="s1">83687663</span><span class="s2">2022.12.12 23:26:49</span><span class="s3">sell</span><span class="s4">0.16</span><span class="s5">gbpcad</span><span class="s6">1.67268</span></div>
<div class="tr wh" style="top:833px"><span class="s1">83687763</span><span class="s2">2022.12.12 23:49:51</span><span class="s3">sell</span><span class="s4">0.20</span><span class="s5">euraud</span><span class="s6">1.56118</span></div>
<div class="tr gr" style="top:854px"><span class="s1">83687802</span><span class="s2">2022.12.12 23:54:27</span><span class="s3">sell</span><span class="s4">0.20</span><span class="s5">eurcad</span><span class="s6">1.43676</span></div>
<div class="tr wh" style="top:875px"><span class="s1">83687828</span><span class="s2">2022.12.12 23:55:08</span><span class="s3">sell</span><span class="s4">0.20</span><span class="s5">euraud</span><span class="s6">1.56180</span></div>
<div class="tr gr" style="top:896px"><span class="s1">83687856</span><span class="s2">2022.12.12 23:56:03</span><span class="s3">buy</span><span class="s4">0.16</span><span class="s5">gbpcad</span><span class="s6">1.67207</span></div>
<div class="tr wh" style="top:917px"><span class="s1">83687873</span><span class="s2">2022.12.12 23:58:32</span><span class="s3">buy</span><span class="s4">0.20</span><span class="s5">gbpaud</span><span class="s6">1.81751</span></div>
<div class="cl" style="left:182px"></div><div class="cl" style="left:465px"></div><div class="cl" style="left:591px"></div><div class="cl" style="left:696px"></div><div class="cl" style="left:824px"></div><div class="cl" style="left:952px"></div>

<svg class="i" style="left:18px;top:730px" width="15" height="17"><use href="#dr"/></svg>
<svg class="i" style="left:18px;top:751px" width="15" height="17"><use href="#db"/></svg>
<svg class="i" style="left:18px;top:772px" width="15" height="17"><use href="#db"/></svg>
<svg class="i" style="left:18px;top:793px" width="15" height="17"><use href="#dr"/></svg>
<svg class="i" style="left:18px;top:814px" width="15" height="17"><use href="#dr"/></svg>
<svg class="i" style="left:18px;top:835px" width="15" height="17"><use href="#dr"/></svg>
<svg class="i" style="left:18px;top:856px" width="15" height="17"><use href="#dr"/></svg>
<svg class="i" style="left:18px;top:877px" width="15" height="17"><use href="#dr"/></svg>
<svg class="i" style="left:18px;top:898px" width="15" height="17"><use href="#db"/></svg>
<svg class="i" style="left:18px;top:919px" width="15" height="17"><use href="#db"/></svg>

<div class="a" style="left:16px;top:938px;width:1009px;height:22px;background:#c1c1c1"></div>
<span class="t" style="left:38px;top:941px;font-size:12.5px;font-weight:bold;color:#222">盈/亏: 1 529.80&nbsp; 信用额: 0.00&nbsp; 存款: 999.64&nbsp; 取款: -1 032.00</span>

<!-- bottom tabs -->
<div class="a" style="left:16px;top:960px;width:1009px;height:8px;background:#f0f0f0"></div>
<div class="a" style="left:16px;top:968px;width:1009px;height:1px;background:#222"></div>
<div class="a" style="left:107px;top:968px;width:67px;height:22px;background:#fff;border:1px solid #222;text-align:center;line-height:20px;color:#222">账户历史</div>
<div class="a" style="left:1px;top:966px;width:14px;height:25px;color:#444;font-size:10px;line-height:12px;text-align:center">终<br>端</div>
<span class="bt" style="left:28px">交易</span><span class="bs" style="left:62px"></span><span class="bt" style="left:72px">展示</span>
<span class="bt" style="left:184px">新闻</span><span class="sb" style="left:210px">99</span><span class="bs" style="left:232px"></span>
<span class="bt" style="left:242px">警报</span><span class="bs" style="left:276px"></span>
<span class="bt" style="left:286px">邮箱</span><span class="bs" style="left:320px"></span>
<span class="bt" style="left:330px">市场</span><span class="sb" style="left:355px">114</span><span class="bs" style="left:384px"></span>
<span class="bt" style="left:394px">信号</span><span class="bs" style="left:428px"></span>
<span class="bt" style="left:438px">文章</span><span class="sb" style="left:465px">1</span><span class="bs" style="left:480px"></span>
<span class="bt" style="left:490px">代码库</span><span class="bs" style="left:536px"></span>
<span class="bt" style="left:546px">EA</span><span class="bs" style="left:571px"></span>
<span class="bt" style="left:582px">日志</span><span class="bs" style="left:615px"></span>

<div class="a" style="left:24px;top:937px;width:358px;height:25px;border:3px solid #cf2d2d;border-radius:3px"></div>

<!-- corner watermark -->
<svg class="i" style="left:800px;top:924px" width="40" height="40" viewBox="0 0 40 40"><path d="M20 2C31 2 39 9 39 19S31 35 20 35c-2 0-4-.3-6-.8L11 39l-1-8C4 28 1 24 1 19 1 9 9 2 20 2z" fill="#fff"/><text x="20" y="29" text-anchor="middle" font-family="Liberation Serif,serif" font-style="italic" font-size="28" fill="#555">f</text></svg>
<span class="t" style="left:842px;top:926px;font-size:35px;line-height:36px;color:#fff;letter-spacing:.4px;text-shadow:-1px 0 0 #444">@4645551</span>
</body></html>
